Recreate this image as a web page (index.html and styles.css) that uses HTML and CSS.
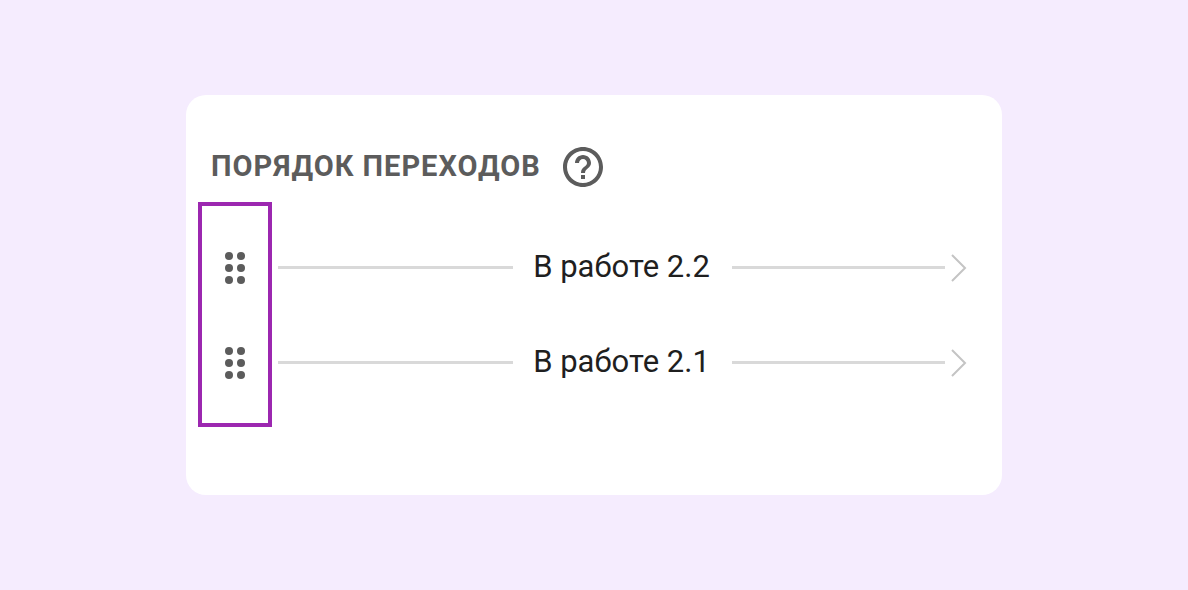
FILE: index.html
```html
<!DOCTYPE html>
<html lang="ru">
<head>
  <meta charset="UTF-8">
  <meta name="viewport" content="width=device-width, initial-scale=1">
  <title>Порядок переходов</title>
  <link rel="stylesheet" href="styles.css">
</head>
<body>
  <main class="card">
    <header class="card-header">
      <h1 class="title">Порядок переходов</h1>
      <button class="icon-btn" type="button" aria-label="Справка">
        <svg class="icon" viewBox="0 0 24 24">
          <path d="M11 18h2v-2h-2v2zm1-16C6.48 2 2 6.48 2 12s4.480 10 10 10 10-4.480 10-10S17.520 2 12 2zm0 18c-4.410 0-8-3.590-8-8s3.590-8 8-8 8 3.590 8 8-3.590 8-8 8zm0-14c-2.210 0-4 1.790-4 4h2c0-1.100.9-2 2-2s2 .9 2 2c0 2-3 1.750-3 5h2c0-2.250 3-2.500 3-5 0-2.210-1.790-4-4-4z"/>
        </svg>
      </button>
    </header>

    <ul class="transitions">
      <li class="transition">
        <button class="icon-btn" type="button" aria-label="Переместить В работе 2.2">
          <svg class="icon" viewBox="0 0 24 24">
            <circle cx="9" cy="6" r="2"/><circle cx="15" cy="6" r="2"/>
            <circle cx="9" cy="12" r="2"/><circle cx="15" cy="12" r="2"/>
            <circle cx="9" cy="18" r="2"/><circle cx="15" cy="18" r="2"/>
          </svg>
        </button>
        <span class="line"></span>
        <span class="name">В работе 2.2</span>
        <span class="arrow">
          <span class="line"></span>
          <svg class="arrow-head" viewBox="0 0 16 28"><path d="M1 1l13 13L1 27"/></svg>
        </span>
      </li>
      <li class="transition">
        <button class="icon-btn" type="button" aria-label="Переместить В работе 2.1">
          <svg class="icon" viewBox="0 0 24 24">
            <circle cx="9" cy="6" r="2"/><circle cx="15" cy="6" r="2"/>
            <circle cx="9" cy="12" r="2"/><circle cx="15" cy="12" r="2"/>
            <circle cx="9" cy="18" r="2"/><circle cx="15" cy="18" r="2"/>
          </svg>
        </button>
        <span class="line"></span>
        <span class="name">В работе 2.1</span>
        <span class="arrow">
          <span class="line"></span>
          <svg class="arrow-head" viewBox="0 0 16 28"><path d="M1 1l13 13L1 27"/></svg>
        </span>
      </li>
    </ul>
  </main>
</body>
</html>
```
FILE: styles.css
```css
* {
  box-sizing: border-box;
}
body {
  margin: 0;
  padding: 95px 186px;
  background-color: #f5ecfe;
  font-family: Roboto, sans-serif;
  color: #1f1f1f;
}
.card {
  padding: 48px 35px 85px 25px;
  border-radius: 20px;
  background-color: white;
}
.card-header {
  display: flex;
  align-items: center;
  gap: 18px;
}
.title {
  margin: 0;
  font-size: 29px;
  line-height: 44px;
  font-weight: 700;
  letter-spacing: 1px;
  text-transform: uppercase;
  color: #5c5c5c;
  padding-bottom: 2px;
}
.icon-btn {
  flex: none;
  width: 48px;
  height: 48px;
  padding: 0;
  border: none;
  background: none;
  color: #5c5c5c;
  cursor: pointer;
}
.icon {
  display: block;
  width: 48px;
  height: 48px;
  fill: currentColor;
}
.transitions {
  position: relative;
  margin: 29px 0 0;
  padding: 0;
  list-style: none;
}
/* frame around the drag handles */
.transitions::after {
  content: "";
  box-sizing: border-box;
  position: absolute;
  top: -18px;
  bottom: -17px;
  left: -13px;
  width: 74px;
  border: 4px solid #9c27b0;
  pointer-events: none;
}
.transition {
  display: flex;
  align-items: center;
  height: 95px;
}
.transition > .line {
  margin-left: 19px;
}
.line {
  flex: 1;
  height: 3px;
  background-color: #d9d9d9;
}
.name {
  padding: 0 22px 2px 20px;
  font-size: 31px;
  line-height: 40px;
  white-space: nowrap;
}
.arrow {
  flex: 1;
  display: flex;
  align-items: center;
  gap: 6px;
}
.arrow-head {
  width: 16px;
  height: 28px;
  fill: none;
  stroke: #c4c4c4;
  stroke-width: 2;
}
```
